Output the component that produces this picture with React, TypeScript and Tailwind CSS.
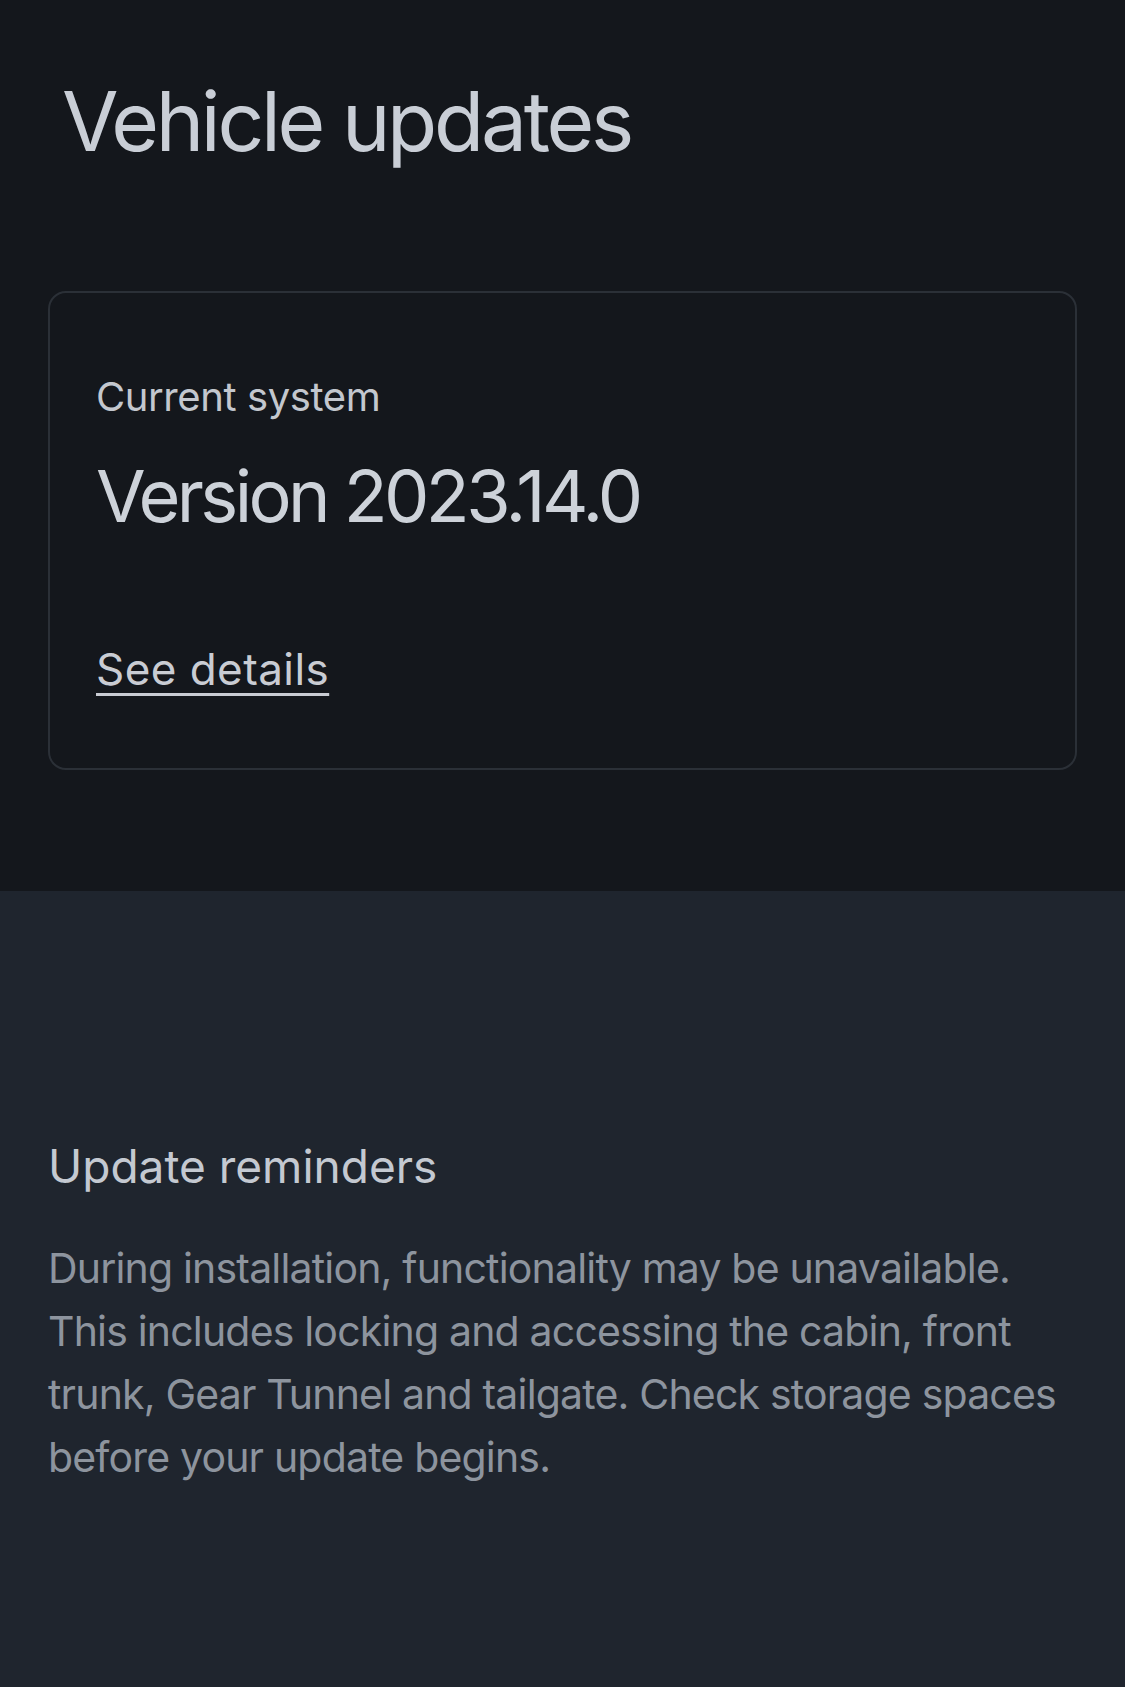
export default function App() {
  return (
    <div className="min-h-[1687px] w-full bg-[#1f252e] font-['Inter',sans-serif]">
      {/* Top: current system */}
      <section className="bg-[#14171c] px-12 pb-[121px]">
        <h1 className="pt-[81px] pl-[14px] text-[82px] leading-none tracking-[-0.04em] text-[#c9ced6]">
          Vehicle updates
        </h1>

        <div className="mt-[128px] rounded-[18px] border-2 border-[#2b3037] px-[46px] pt-[84px] pb-[77px]">
          <p className="text-[40px] leading-none tracking-[-0.01em] text-[#c3c7ce]">Current system</p>
          <p className="mt-[43px] text-[72px] leading-none tracking-[-0.05em] text-[#cdd2d9]">
            Version 2023.14.0
          </p>
          <a
            href="#"
            className="mt-[115px] inline-block text-[44px] leading-none tracking-[0.01em] text-[#c9ccd3] underline decoration-[3px] underline-offset-[8px]"
          >
            See details
          </a>
        </div>
      </section>

      {/* Bottom: reminders */}
      <section className="px-12 pt-[252px] pb-16">
        <h2 className="text-[46px] leading-none text-[#c4c9d1]">Update reminders</h2>
        <p className="mt-[48px] text-[41px] leading-[63px] tracking-[-0.02em] text-[#8d949e]">
          <span className="block whitespace-nowrap">During installation, functionality may be unavailable.</span>
          <span className="block whitespace-nowrap">This includes locking and accessing the cabin, front</span>
          <span className="block whitespace-nowrap">trunk, Gear Tunnel and tailgate. Check storage spaces</span>
          <span className="block whitespace-nowrap">before your update begins.</span>
        </p>
      </section>
    </div>
  )
}
